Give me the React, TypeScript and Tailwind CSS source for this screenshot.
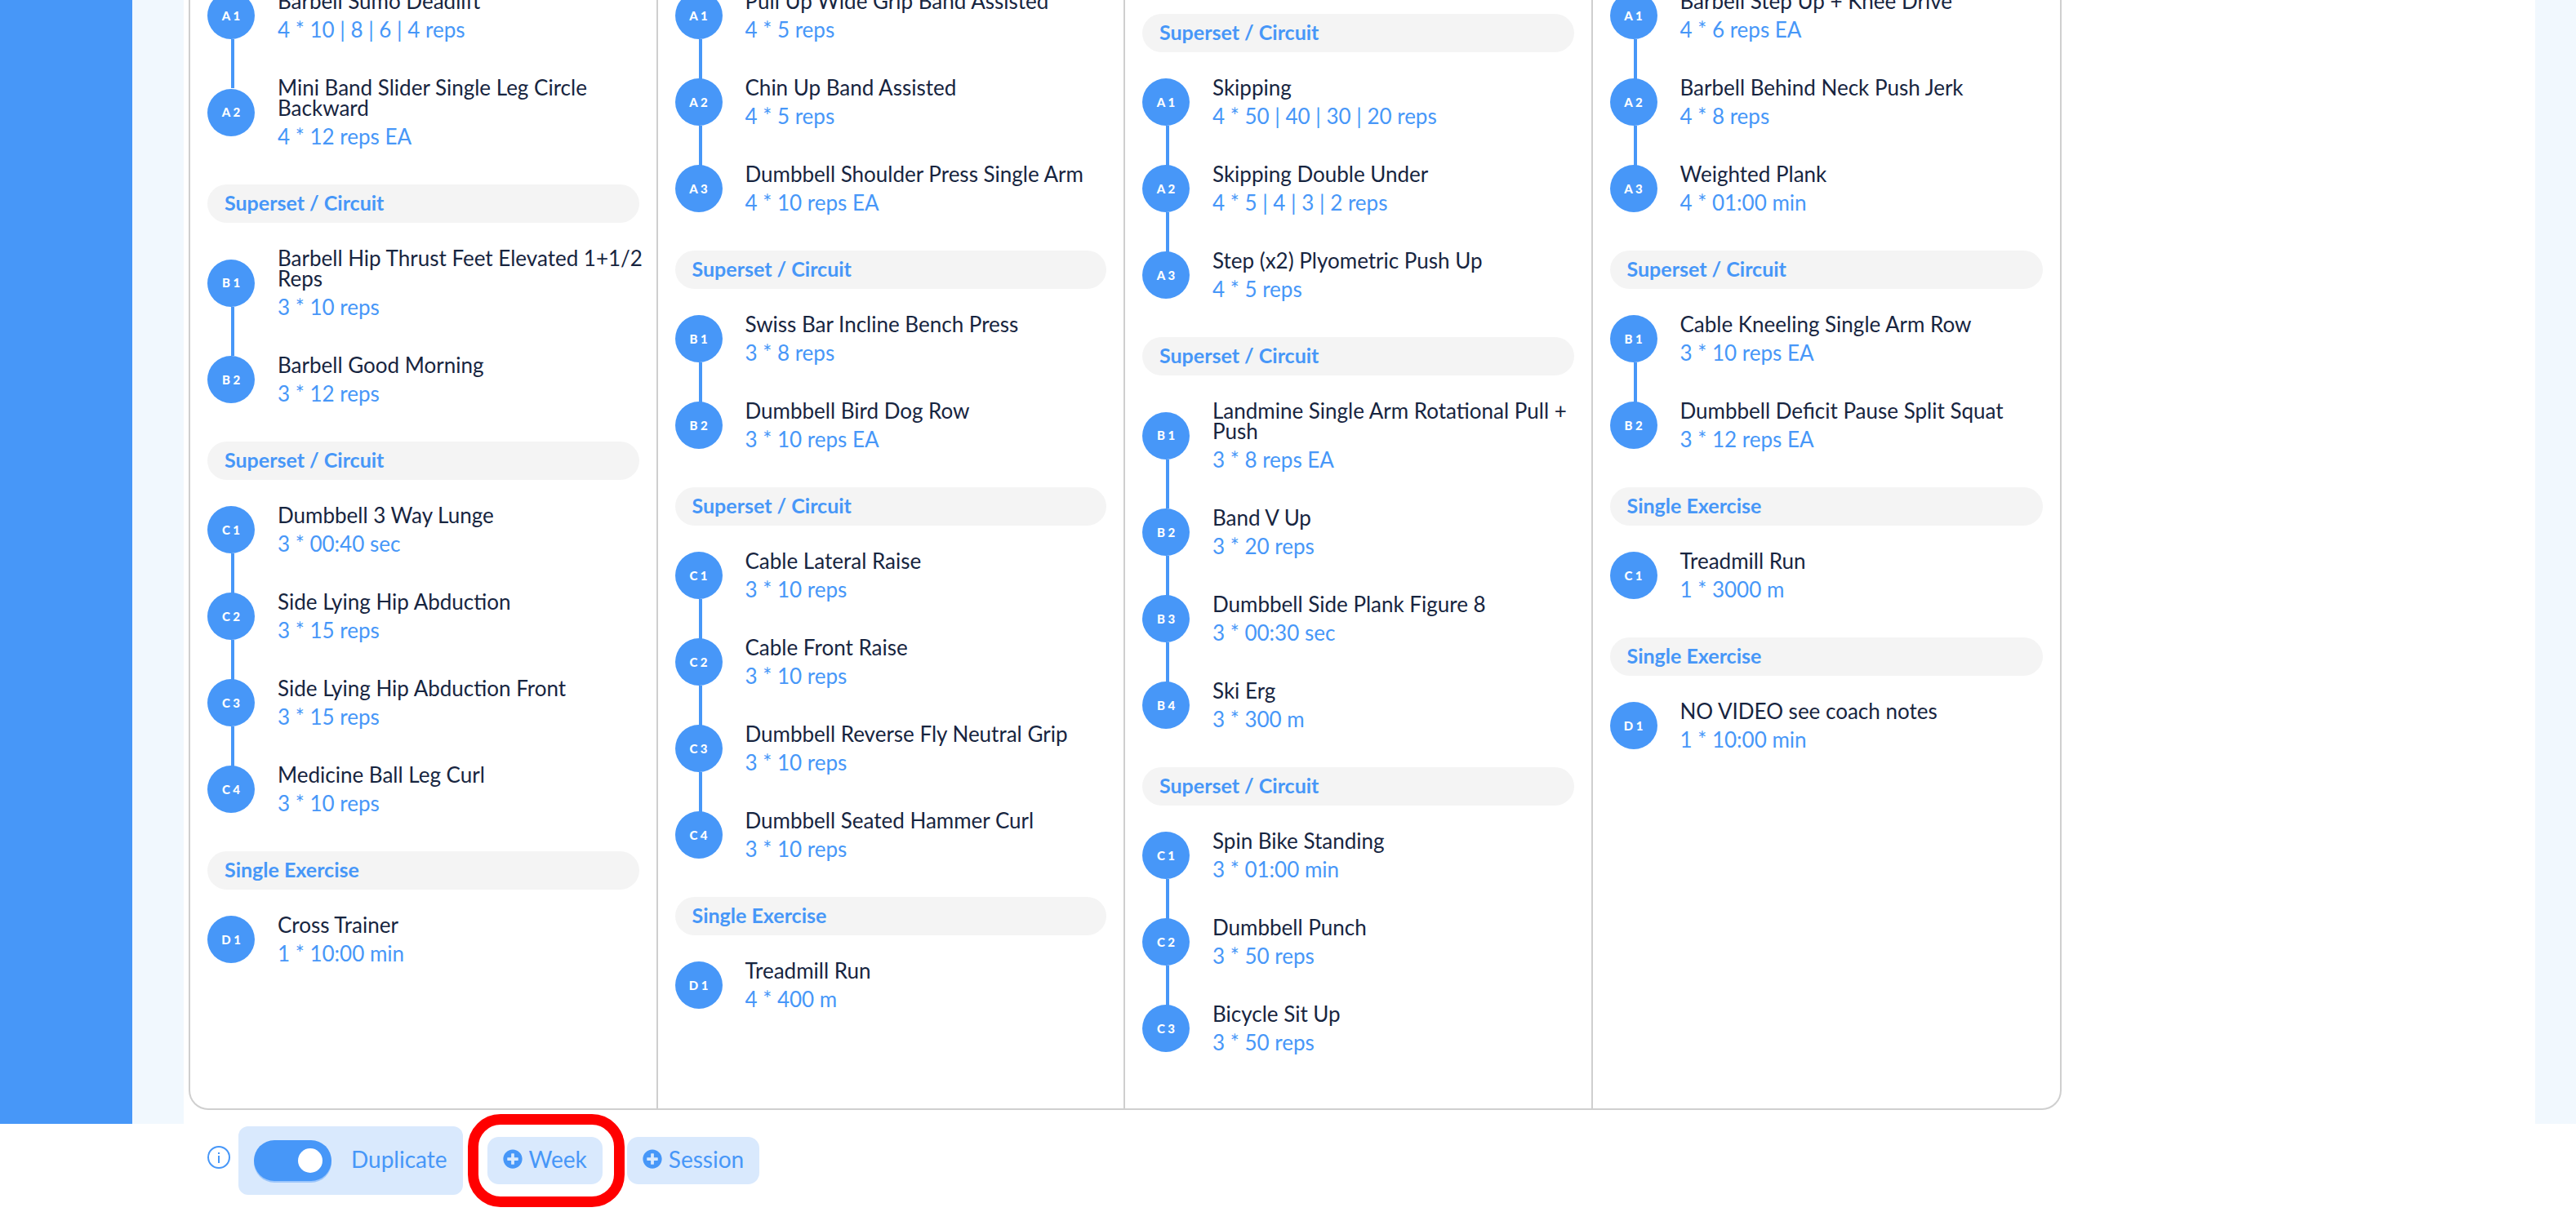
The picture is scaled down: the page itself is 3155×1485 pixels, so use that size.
import { FaPlusCircle } from "react-icons/fa";

type Exercise = { code: string; name: string; sets: string };
type Block = { title?: string; exercises: Exercise[] };

const ex = (code: string, name: string, sets: string): Exercise => ({ code, name, sets });

const SUPERSET = "Superset / Circuit";
const SINGLE = "Single Exercise";

const sessions: Block[][] = [
  [
    {
      exercises: [
        ex("A 1", "Barbell Sumo Deadlift", "4 * 10 | 8 | 6 | 4 reps"),
        ex("A 2", "Mini Band Slider Single Leg Circle Backward", "4 * 12 reps EA"),
      ],
    },
    {
      title: SUPERSET,
      exercises: [
        ex("B 1", "Barbell Hip Thrust Feet Elevated 1+1/2 Reps", "3 * 10 reps"),
        ex("B 2", "Barbell Good Morning", "3 * 12 reps"),
      ],
    },
    {
      title: SUPERSET,
      exercises: [
        ex("C 1", "Dumbbell 3 Way Lunge", "3 * 00:40 sec"),
        ex("C 2", "Side Lying Hip Abduction", "3 * 15 reps"),
        ex("C 3", "Side Lying Hip Abduction Front", "3 * 15 reps"),
        ex("C 4", "Medicine Ball Leg Curl", "3 * 10 reps"),
      ],
    },
    { title: SINGLE, exercises: [ex("D 1", "Cross Trainer", "1 * 10:00 min")] },
  ],
  [
    {
      exercises: [
        ex("A 1", "Pull Up Wide Grip Band Assisted", "4 * 5 reps"),
        ex("A 2", "Chin Up Band Assisted", "4 * 5 reps"),
        ex("A 3", "Dumbbell Shoulder Press Single Arm", "4 * 10 reps EA"),
      ],
    },
    {
      title: SUPERSET,
      exercises: [
        ex("B 1", "Swiss Bar Incline Bench Press", "3 * 8 reps"),
        ex("B 2", "Dumbbell Bird Dog Row", "3 * 10 reps EA"),
      ],
    },
    {
      title: SUPERSET,
      exercises: [
        ex("C 1", "Cable Lateral Raise", "3 * 10 reps"),
        ex("C 2", "Cable Front Raise", "3 * 10 reps"),
        ex("C 3", "Dumbbell Reverse Fly Neutral Grip", "3 * 10 reps"),
        ex("C 4", "Dumbbell Seated Hammer Curl", "3 * 10 reps"),
      ],
    },
    { title: SINGLE, exercises: [ex("D 1", "Treadmill Run", "4 * 400 m")] },
  ],
  [
    {
      title: SUPERSET,
      exercises: [
        ex("A 1", "Skipping", "4 * 50 | 40 | 30 | 20 reps"),
        ex("A 2", "Skipping Double Under", "4 * 5 | 4 | 3 | 2 reps"),
        ex("A 3", "Step (x2) Plyometric Push Up", "4 * 5 reps"),
      ],
    },
    {
      title: SUPERSET,
      exercises: [
        ex("B 1", "Landmine Single Arm Rotational Pull + Push", "3 * 8 reps EA"),
        ex("B 2", "Band V Up", "3 * 20 reps"),
        ex("B 3", "Dumbbell Side Plank Figure 8", "3 * 00:30 sec"),
        ex("B 4", "Ski Erg", "3 * 300 m"),
      ],
    },
    {
      title: SUPERSET,
      exercises: [
        ex("C 1", "Spin Bike Standing", "3 * 01:00 min"),
        ex("C 2", "Dumbbell Punch", "3 * 50 reps"),
        ex("C 3", "Bicycle Sit Up", "3 * 50 reps"),
      ],
    },
  ],
  [
    {
      exercises: [
        ex("A 1", "Barbell Step Up + Knee Drive", "4 * 6 reps EA"),
        ex("A 2", "Barbell Behind Neck Push Jerk", "4 * 8 reps"),
        ex("A 3", "Weighted Plank", "4 * 01:00 min"),
      ],
    },
    {
      title: SUPERSET,
      exercises: [
        ex("B 1", "Cable Kneeling Single Arm Row", "3 * 10 reps EA"),
        ex("B 2", "Dumbbell Deficit Pause Split Squat", "3 * 12 reps EA"),
      ],
    },
    { title: SINGLE, exercises: [ex("C 1", "Treadmill Run", "1 * 3000 m")] },
    { title: SINGLE, exercises: [ex("D 1", "NO VIDEO see coach notes", "1 * 10:00 min")] },
  ],
];

function ExerciseRow({ exercise, linked }: { exercise: Exercise; linked: boolean }) {
  return (
    <li className="flex items-center gap-7">
      <div className="relative shrink-0">
        {linked && <span className="absolute left-[29px] top-full h-[60px] w-1 bg-[#4797f8]" />}
        <span className="flex size-[58px] items-center justify-center rounded-full bg-[#4797f8] text-[15px] font-black text-white">
          {exercise.code}
        </span>
      </div>
      <div className="-mr-5 flex min-w-0 flex-1 flex-col gap-2.5 text-[26px] leading-[25px]">
        <p className="text-[#17253f]">{exercise.name}</p>
        <p className="text-[#4797f8]">{exercise.sets}</p>
      </div>
    </li>
  );
}

function BlockView({ block }: { block: Block }) {
  return (
    <section>
      {block.title && (
        <h3 className="mb-[31px] flex h-[47px] items-center rounded-full bg-[#f4f4f4] px-[21px] pb-0.5 text-[25px] font-bold text-[#4797f8]">
          {block.title}
        </h3>
      )}
      <ul className="flex flex-col gap-[46px]">
        {block.exercises.map((e, i) => (
          <ExerciseRow key={e.code} exercise={e} linked={i < block.exercises.length - 1} />
        ))}
      </ul>
    </section>
  );
}

function InfoIcon() {
  return (
    <svg viewBox="0 0 28 28" className="size-7" fill="none" stroke="currentColor" strokeWidth="2" aria-hidden="true">
      <circle cx="14" cy="14" r="13" />
      <path d="M14 12v9" />
      <path d="M14 8v2" />
    </svg>
  );
}

function AddButton({ label }: { label: string }) {
  return (
    <button
      type="button"
      className="flex h-[58px] items-center gap-2 rounded-[14px] bg-[#d9e9fd] px-[19px] pb-1 text-[28px] text-[#4797f8]"
    >
      <FaPlusCircle className="size-6" />
      {label}
    </button>
  );
}

export default function App() {
  return (
    <div className="flex min-h-screen overflow-hidden bg-white font-['Lato',sans-serif]">
      <aside className="mb-[108px] w-[162px] shrink-0 bg-[#4797f8]" />
      <div className="mb-[108px] w-[63px] shrink-0 bg-[#f1f8fe]" />
      <main className="min-w-0 flex-1 px-1.5">
        <div className="-mt-[11px] grid w-full max-w-[2294px] grid-cols-4 rounded-b-3xl border-2 border-t-0 border-[#cfcfcf]">
          {sessions.map((blocks, i) => (
            <div
              key={i}
              className="flex flex-col gap-[46px] border-[#cfcfcf] px-[21px] pb-17 not-last:border-r-2 nth-3:pt-7"
            >
              {blocks.map((b, j) => (
                <BlockView key={j} block={b} />
              ))}
            </div>
          ))}
        </div>
        <div className="mt-5 flex items-center pl-[23px]">
          <button type="button" aria-label="About duplicating" className="mb-2 mr-2.5 text-[#4797f8]">
            <InfoIcon />
          </button>
          <label className="mr-[30px] flex h-[84px] items-center gap-6 rounded-xl bg-[#d9e9fd] px-[19px] text-[28px] text-[#4797f8]">
            <input
              type="checkbox"
              role="switch"
              defaultChecked
              className="flex h-[50px] w-[95px] appearance-none items-center justify-end rounded-full bg-[#4797f8] px-[11px] shadow-[0_2px_0_#9cc6fb] before:size-[30px] before:rounded-full before:bg-white"
            />
            <span className="pb-1">Duplicate</span>
          </label>
          <div className="relative mr-[30px]">
            <AddButton label="Week" />
            <span className="pointer-events-none absolute -inset-y-7 -left-6 -right-[27px] rounded-[40px] border-[13px] border-[#ff0000]" />
          </div>
          <AddButton label="Session" />
        </div>
      </main>
      <div className="mb-[108px] w-[50px] shrink-0 bg-[#f1f8fe]" />
    </div>
  );
}
